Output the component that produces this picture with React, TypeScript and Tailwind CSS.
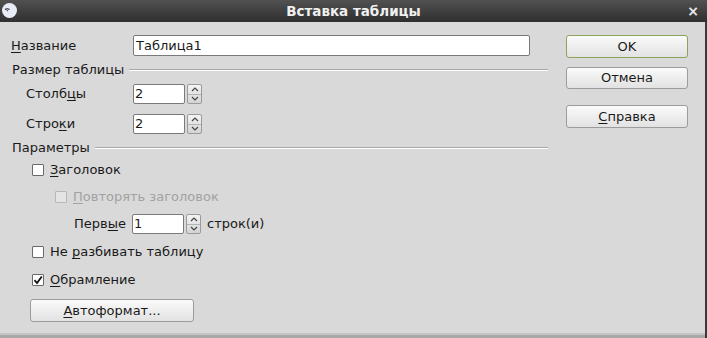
import React from "react";

const font = { fontFamily: '"DejaVu Sans", "Liberation Sans", sans-serif' };

function Mn({ children }: { children: React.ReactNode }) {
  return <span className="underline underline-offset-2">{children}</span>;
}

function Spinner() {
  return (
    <div className="ml-[2px] flex h-[20px] w-[15px] flex-col rounded-[2px] border border-[#9a9a9a] bg-gradient-to-b from-[#f4f4f4] to-[#d4d4d4]">
      <div className="flex flex-1 items-center justify-center border-b border-[#b4b4b4]">
        <svg viewBox="0 0 8 5" className="h-[5px] w-[8px]">
          <path d="M1 4 4 1 7 4" fill="none" stroke="#444" strokeWidth="1.2" />
        </svg>
      </div>
      <div className="flex flex-1 items-center justify-center">
        <svg viewBox="0 0 8 5" className="h-[5px] w-[8px]">
          <path d="M1 1 4 4 7 1" fill="none" stroke="#444" strokeWidth="1.2" />
        </svg>
      </div>
    </div>
  );
}

function SpinField({ value }: { value: string }) {
  return (
    <div className="flex items-center">
      <div className="flex h-[20px] w-[52px] items-center rounded-[2px] border border-[#7a7a7a] bg-white pl-[1px] text-[13px]">
        {value}
      </div>
      <Spinner />
    </div>
  );
}

function Check({ checked, disabled }: { checked?: boolean; disabled?: boolean }) {
  return (
    <div
      className={`flex h-[12px] w-[12px] items-center justify-center rounded-[1px] border ${
        disabled ? "border-[#b8b8b8] bg-[#e4e4e4]" : "border-[#6a6a6a] bg-white"
      }`}
    >
      {checked && (
        <svg viewBox="0 0 10 10" className="h-[10px] w-[10px]">
          <path d="M1.5 5.2 4 8 8.8 1.5" fill="none" stroke="#111" strokeWidth="1.8" />
        </svg>
      )}
    </div>
  );
}

function Section({ title }: { title: string }) {
  return (
    <div className="flex h-[28px] items-center pl-[1px]">
      <span className="text-[13px]">{title}</span>
      <div className="ml-[5px] flex-1 border-t border-b border-t-[#a8a8a8] border-b-white" />
    </div>
  );
}

function Button({ children, ok, h = "h-[23px]" }: { children: React.ReactNode; ok?: boolean; h?: string }) {
  return (
    <div
      className={`flex ${h} items-center justify-center rounded-[3px] border bg-gradient-to-b from-[#fafafa] to-[#e2e2e2] text-[13px] ${
        ok ? "border-[#8ea35a]" : "border-[#9c9c9c]"
      }`}
    >
      {children}
    </div>
  );
}

export default function App() {
  return (
    <div className="h-[338px] w-[707px] overflow-hidden bg-[#3a3a3a] text-[#1a1a1a]" style={font}>
      <div className="relative flex h-[22px] items-center justify-center bg-gradient-to-b from-[#515151] to-[#2f2f2f]">
        <div className="absolute left-[2px] top-[3px] flex h-[15px] w-[15px] items-center justify-center rounded-full bg-[#e8ecf6]">
          <svg viewBox="0 0 15 15" className="h-[15px] w-[15px]">
            <path d="M3 6.5 C4.5 5.5 6 5.5 7.5 6.5" fill="none" stroke="#222" strokeWidth="1.2" />
            <path d="M5 7 l0.5 1.2" stroke="#222" strokeWidth="1" />
          </svg>
        </div>
        <span className="text-[13.5px] font-bold text-[#f0f0f0]">Вставка таблицы</span>
        <span className="absolute right-[8px] top-[1px] text-[14px] font-bold text-[#e8e8e8]">×</span>
      </div>

      <div className="flex h-[311px] w-[705px] bg-[#d9d9d9]">
        <div className="flex w-[548px] flex-col pl-[11px] pt-[13px]">
          <div className="flex h-[21px] items-center">
            <span className="w-[122px] text-[13px]">
              <Mn>Н</Mn>азвание
            </span>
            <div className="flex h-[21px] w-[397px] items-center rounded-[2px] border border-[#7a7a7a] bg-white pl-[2px] text-[13px]">
              Таблица1
            </div>
          </div>

          <Section title="Размер таблицы" />
          <div className="flex h-[20px] items-center pl-[15px]">
            <span className="w-[107px] text-[13px]">
              Столб<Mn>ц</Mn>ы
            </span>
            <SpinField value="2" />
          </div>
          <div className="mt-[10px] flex h-[20px] items-center pl-[15px]">
            <span className="w-[107px] text-[13px]">
              Стро<Mn>к</Mn>и
            </span>
            <SpinField value="2" />
          </div>

          <Section title="Параметры" />
          <div className="flex h-[16px] items-center gap-[6px] pl-[21px] text-[13px]">
            <Check />
            <span>
              <Mn>З</Mn>аголовок
            </span>
          </div>
          <div className="mt-[11px] flex h-[16px] items-center gap-[6px] pl-[44px] text-[13px] text-[#a2a2a2]">
            <Check disabled />
            <span>
              <Mn>П</Mn>овторять заголовок
            </span>
          </div>
          <div className="mt-[9px] flex h-[20px] items-center pl-[63px] text-[13px]">
            <span className="w-[58px]">
              Перв<Mn>ы</Mn>е
            </span>
            <SpinField value="1" />
            <span className="ml-[6px]">строк(и)</span>
          </div>
          <div className="mt-[10px] flex h-[16px] items-center gap-[6px] pl-[21px] text-[13px]">
            <Check />
            <span>
              Не <Mn>р</Mn>азбивать таблицу
            </span>
          </div>
          <div className="mt-[12px] flex h-[16px] items-center gap-[6px] pl-[21px] text-[13px]">
            <Check checked />
            <span>
              <Mn>О</Mn>брамление
            </span>
          </div>
          <div className="mt-[11px] pl-[19px]">
            <div className="w-[164px]">
              <Button h="h-[23px]">
                <span>
                  <Mn>А</Mn>втоформат...
                </span>
              </Button>
            </div>
          </div>
        </div>

        <div className="ml-[18px] flex w-[122px] flex-col pt-[13px]">
          <Button ok>OK</Button>
          <div className="mt-[9px]">
            <Button h="h-[22px]">Отмена</Button>
          </div>
          <div className="mt-[16px]">
            <Button>
              <span>
                <Mn>С</Mn>правка
              </span>
            </Button>
          </div>
        </div>
      </div>
      <div className="h-[2px] w-[705px] bg-[#c4c4c4]" />
      <div className="h-[3px] w-[705px] bg-[#a8a8a8]" />
    </div>
  );
}
